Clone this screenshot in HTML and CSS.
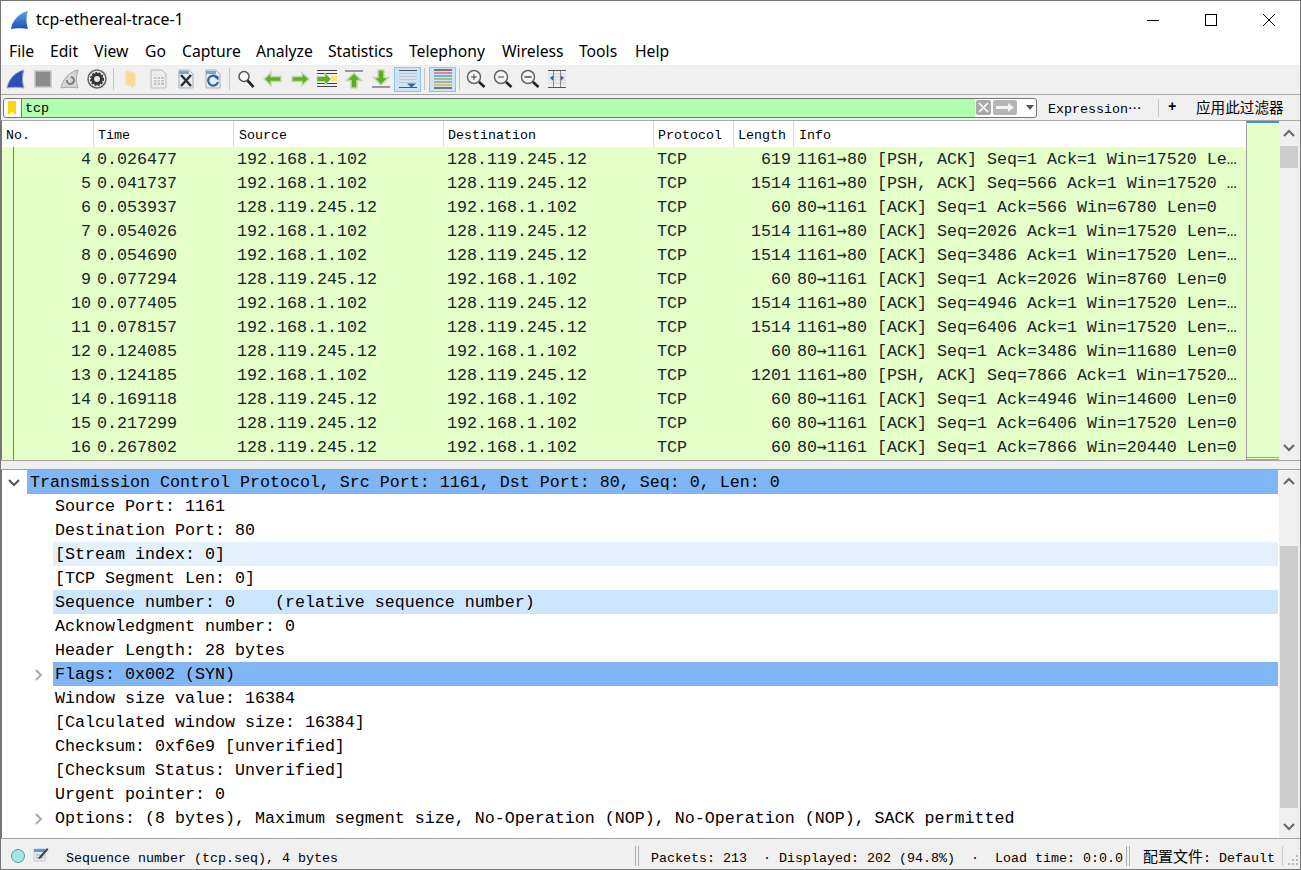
FILE: index.html
```html
<!DOCTYPE html>
<html lang="en">
<head>
<meta charset="utf-8">
<title>tcp-ethereal-trace-1</title>
<link rel="stylesheet" href="styles.css">
</head>
<body>
<div class="window">
  <header class="titlebar">
    <svg class="app-icon" width="20" height="20" viewBox="0 0 20 20"><defs><linearGradient id="fin" x1="0" y1="0" x2="0" y2="1"><stop offset="0" stop-color="#5fa4e8"/><stop offset="1" stop-color="#1c4fb4"/></linearGradient></defs><path d="M1 19C2 12 8 3 18 1c-2 5-2 12 0 18-5-1-12-1-17 0z" fill="url(#fin)"/></svg>
    <span class="title">tcp-ethereal-trace-1</span>
    <div class="winctl">
      <svg class="ctl" width="58" height="38" viewBox="0 0 58 38"><path d="M23 19.5h12" stroke="#000" fill="none"/></svg>
      <svg class="ctl" width="58" height="38" viewBox="0 0 58 38"><rect x="23.500" y="13.500" width="11" height="11" stroke="#000" fill="none"/></svg>
      <svg class="ctl" width="58" height="38" viewBox="0 0 58 38"><path d="M23 13l12 12M35 13L23 25" stroke="#000" fill="none"/></svg>
    </div>
  </header>
  <nav class="menubar">
    <span>File</span><span>Edit</span><span>View</span><span>Go</span><span>Capture</span><span>Analyze</span><span>Statistics</span><span>Telephony</span><span>Wireless</span><span>Tools</span><span>Help</span>
  </nav>
  <div class="toolbar">
    <div class="tb"><svg width="20" height="20" viewBox="0 0 20 20"><path d="M1 19C2 12 8 3 18 1c-2 5-2 12 0 18-5-1-12-1-17 0z" fill="#2c4fb8" stroke="#9aa6c8"/></svg></div>
    <div class="tb"><svg width="20" height="20" viewBox="0 0 20 20"><rect x="2" y="2" width="16" height="16" fill="#8c8c8c" stroke="#c4c4c4" stroke-width="1.500"/></svg></div>
    <div class="tb"><svg width="20" height="20" viewBox="0 0 20 20"><path d="M1 19C2 12 8 3 18 1c-2 5-2 12 0 18-5-1-12-1-17 0z" fill="#d6d6d6" stroke="#a8a8a8"/><path d="M7 11a3.500 3.500 0 1 0 4-3" fill="none" stroke="#808080" stroke-width="2"/></svg></div>
    <div class="tb"><svg width="20" height="20" viewBox="0 0 20 20"><circle cx="10" cy="10" r="9" fill="#e8e8e8" stroke="#666" stroke-width="1.500"/><circle cx="10" cy="10" r="4.500" fill="none" stroke="#333" stroke-width="3"/><circle cx="10" cy="10" r="6.300" fill="none" stroke="#333" stroke-width="1.500" stroke-dasharray="2 1.400"/></svg></div>
    <div class="tsep big"></div>
    <div class="tb"><svg width="20" height="20" viewBox="0 0 20 20"><path d="M4 2l7 2h2v12l-3 3-1-3H4z" fill="#fbdc8c" stroke="#f2dfae"/></svg></div>
    <div class="tb"><svg width="20" height="20" viewBox="0 0 20 20"><path d="M2 1h11l4 4v14H2z" fill="#ececec" stroke="#bbb"/><path d="M5 8h10v8H5z" fill="#c4c4c4"/><path d="M5 10.500h10M5 13h10M8 8v8M11.500 8v8" stroke="#f4f4f4" fill="none"/></svg></div>
    <div class="tb"><svg width="20" height="20" viewBox="0 0 20 20"><path d="M3 1h10l4 4v14H3z" fill="#e8eef2" stroke="#a8b0b6"/><path d="M3 2h10v3H3z" fill="#6aa9dc"/><path d="M5 6l10 11M15 6L5 17" stroke="#2b2b2b" stroke-width="2.400" fill="none"/></svg></div>
    <div class="tb"><svg width="20" height="20" viewBox="0 0 20 20"><path d="M3 1h10l4 4v14H3z" fill="#e8eef2" stroke="#a8b0b6"/><path d="M3 2h10v3H3z" fill="#6aa9dc"/><path d="M14.500 9a5 5 0 1 0 .500 4" stroke="#2c63b0" stroke-width="2.200" fill="none"/><path d="M11 8l4.500-1v4.500z" fill="#2c63b0"/></svg></div>
    <div class="tsep"></div>
    <div class="tb"><svg width="20" height="20" viewBox="0 0 20 20"><circle cx="8" cy="7.500" r="5" fill="#f4f6f8" stroke="#555" stroke-width="1.500"/><path d="M11.500 11.500l6 6.500" stroke="#222" stroke-width="2.600" fill="none"/></svg></div>
    <div class="tb"><svg width="20" height="20" viewBox="0 0 20 20"><path d="M1 10l7-6.500v4h10v5H8v4z" fill="#66ad22" stroke="#c4d8ae" stroke-width="1.500"/></svg></div>
    <div class="tb"><svg width="20" height="20" viewBox="0 0 20 20"><path d="M19 10l-7-6.500v4H2v5h10v4z" fill="#66ad22" stroke="#c4d8ae" stroke-width="1.500"/></svg></div>
    <div class="tb"><svg width="22" height="20" viewBox="0 0 22 20"><path d="M1 1.500h20M1 4.500h20M1 14.500h20M1 17.500h20" stroke="#444" fill="none"/><path d="M15 7h6v5h-6z" fill="#f7e56e"/><path d="M15 10l-6-6v3.500H1v5h8V16z" fill="#66ad22" stroke="#c4d8ae"/></svg></div>
    <div class="tb"><svg width="20" height="20" viewBox="0 0 20 20"><path d="M1 2h18" stroke="#999" stroke-width="2" fill="none"/><path d="M10 4l7.500 7.500H13V19H7v-7.500H2.500z" fill="#5fae1e" stroke="#c4d8ae" stroke-width="1.500"/></svg></div>
    <div class="tb"><svg width="20" height="20" viewBox="0 0 20 20"><path d="M1 18h18" stroke="#999" stroke-width="2" fill="none"/><path d="M10 16L17.500 8.500H13V1H7v7.500H2.500z" fill="#5fae1e" stroke="#c4d8ae" stroke-width="1.500"/></svg></div>
    <div class="tb on"><svg width="20" height="20" viewBox="0 0 20 20"><path d="M1 1.500h18" stroke="#555" fill="none"/><path d="M1 4.500h18M1 7.500h18M1 10.500h18M1 13.500h18" stroke="#c8c8c8" fill="none"/><path d="M1 18.500h18" stroke="#555" fill="none"/><path d="M9 14.500h9l-4.500 4z" fill="#2c63b0"/></svg></div>
    <div class="tsep big"></div>
    <div class="tb on"><svg width="20" height="20" viewBox="0 0 20 20"><path d="M1 1h18" stroke="#555" stroke-width="1.500" fill="none"/><path d="M1 4h18" stroke="#e06666" stroke-width="1.500" fill="none"/><path d="M1 7h18" stroke="#6a8fd8" stroke-width="1.500" fill="none"/><path d="M1 10h18" stroke="#7cc04a" stroke-width="1.500" fill="none"/><path d="M1 13h18" stroke="#9a9a9a" stroke-width="1.500" fill="none"/><path d="M1 16h18" stroke="#e0b83a" stroke-width="1.500" fill="none"/><path d="M1 19h18" stroke="#555" stroke-width="1.500" fill="none"/></svg></div>
    <div class="tsep"></div>
    <div class="tb"><svg width="20" height="20" viewBox="0 0 20 20"><circle cx="8" cy="8" r="6.500" fill="#f4f4f4" stroke="#666" stroke-width="1.500"/><path d="M5 8h6M8 5v6" stroke="#444" fill="none"/><path d="M13 13l5.500 5" stroke="#222" stroke-width="2.600" fill="none"/></svg></div>
    <div class="tb"><svg width="20" height="20" viewBox="0 0 20 20"><circle cx="8" cy="8" r="6.500" fill="#f4f4f4" stroke="#666" stroke-width="1.500"/><path d="M5 8h6" stroke="#444" fill="none"/><path d="M13 13l5.500 5" stroke="#222" stroke-width="2.600" fill="none"/></svg></div>
    <div class="tb"><svg width="20" height="20" viewBox="0 0 20 20"><circle cx="8" cy="8" r="6.500" fill="#f4f4f4" stroke="#666" stroke-width="1.500"/><path d="M4.500 7h7v2h-7z" fill="#777"/><path d="M13 13l5.500 5" stroke="#222" stroke-width="2.600" fill="none"/></svg></div>
    <div class="tb"><svg width="20" height="20" viewBox="0 0 20 20"><path d="M1 1.500h18M1 18.500h18" stroke="#555" fill="none"/><path d="M1 5h18M1 8h18M1 11h18M1 14h18" stroke="#cfcfcf" fill="none"/><path d="M6.500 2v16M13.500 2v16" stroke="#888" fill="none"/><path d="M6 6.500v5l-3-2.500zM14 6.500v5l3-2.500z" fill="#2c63b0"/></svg></div>
  </div>
  <div class="filterbar">
    <div class="filter">
      <div class="bookmark"><svg width="10" height="16" viewBox="0 0 10 16"><path d="M1 1h8v14l-4-3-4 3z" fill="#f7d80c"/></svg></div>
      <div class="finput">tcp</div>
      <div class="fbtns">
        <svg width="15" height="15" viewBox="0 0 15 15"><rect width="15" height="15" rx="2" fill="#aaa"/><path d="M3 3l9 9M12 3l-9 9" stroke="#fff" stroke-width="1.600" fill="none"/></svg>
        <svg width="24" height="15" viewBox="0 0 24 15"><rect width="24" height="15" rx="2" fill="#b5b5b5"/><path d="M3 6h12V3l6 4.500-6 4.500V9H3z" fill="#f4f4f4"/></svg>
        <svg class="fdrop" width="8" height="5" viewBox="0 0 8 5"><path d="M0 0h8L4 5z" fill="#555"/></svg>
      </div>
    </div>
    <span class="fexpr">Expression<span class="wide" lang="zh-CN">…</span></span>
    <div class="fsep"></div>
    <span class="fplus">+</span>
    <span class="fapply" lang="zh-CN">应用此过滤器</span>
  </div>
  <section class="packets">
    <div class="plist">
      <div class="phead"><span>No.</span><span>Time</span><span>Source</span><span>Destination</span><span>Protocol</span><span>Length</span><span>Info</span></div>
      <div class="pbody">
        <div class="prow"><span class="no">4</span><span>0.026477</span><span>192.168.1.102</span><span>128.119.245.12</span><span>TCP</span><span class="len">619</span><span>1161<b class="arr">→</b>80 [PSH, ACK] Seq=1 Ack=1 Win=17520 Le…</span></div>
        <div class="prow"><span class="no">5</span><span>0.041737</span><span>192.168.1.102</span><span>128.119.245.12</span><span>TCP</span><span class="len">1514</span><span>1161<b class="arr">→</b>80 [PSH, ACK] Seq=566 Ack=1 Win=17520 …</span></div>
        <div class="prow"><span class="no">6</span><span>0.053937</span><span>128.119.245.12</span><span>192.168.1.102</span><span>TCP</span><span class="len">60</span><span>80<b class="arr">→</b>1161 [ACK] Seq=1 Ack=566 Win=6780 Len=0</span></div>
        <div class="prow"><span class="no">7</span><span>0.054026</span><span>192.168.1.102</span><span>128.119.245.12</span><span>TCP</span><span class="len">1514</span><span>1161<b class="arr">→</b>80 [ACK] Seq=2026 Ack=1 Win=17520 Len=…</span></div>
        <div class="prow"><span class="no">8</span><span>0.054690</span><span>192.168.1.102</span><span>128.119.245.12</span><span>TCP</span><span class="len">1514</span><span>1161<b class="arr">→</b>80 [ACK] Seq=3486 Ack=1 Win=17520 Len=…</span></div>
        <div class="prow"><span class="no">9</span><span>0.077294</span><span>128.119.245.12</span><span>192.168.1.102</span><span>TCP</span><span class="len">60</span><span>80<b class="arr">→</b>1161 [ACK] Seq=1 Ack=2026 Win=8760 Len=0</span></div>
        <div class="prow"><span class="no">10</span><span>0.077405</span><span>192.168.1.102</span><span>128.119.245.12</span><span>TCP</span><span class="len">1514</span><span>1161<b class="arr">→</b>80 [ACK] Seq=4946 Ack=1 Win=17520 Len=…</span></div>
        <div class="prow"><span class="no">11</span><span>0.078157</span><span>192.168.1.102</span><span>128.119.245.12</span><span>TCP</span><span class="len">1514</span><span>1161<b class="arr">→</b>80 [ACK] Seq=6406 Ack=1 Win=17520 Len=…</span></div>
        <div class="prow"><span class="no">12</span><span>0.124085</span><span>128.119.245.12</span><span>192.168.1.102</span><span>TCP</span><span class="len">60</span><span>80<b class="arr">→</b>1161 [ACK] Seq=1 Ack=3486 Win=11680 Len=0</span></div>
        <div class="prow"><span class="no">13</span><span>0.124185</span><span>192.168.1.102</span><span>128.119.245.12</span><span>TCP</span><span class="len">1201</span><span>1161<b class="arr">→</b>80 [PSH, ACK] Seq=7866 Ack=1 Win=17520…</span></div>
        <div class="prow"><span class="no">14</span><span>0.169118</span><span>128.119.245.12</span><span>192.168.1.102</span><span>TCP</span><span class="len">60</span><span>80<b class="arr">→</b>1161 [ACK] Seq=1 Ack=4946 Win=14600 Len=0</span></div>
        <div class="prow"><span class="no">15</span><span>0.217299</span><span>128.119.245.12</span><span>192.168.1.102</span><span>TCP</span><span class="len">60</span><span>80<b class="arr">→</b>1161 [ACK] Seq=1 Ack=6406 Win=17520 Len=0</span></div>
        <div class="prow"><span class="no">16</span><span>0.267802</span><span>128.119.245.12</span><span>192.168.1.102</span><span>TCP</span><span class="len">60</span><span>80<b class="arr">→</b>1161 [ACK] Seq=1 Ack=7866 Win=20440 Len=0</span></div>
      </div>
    </div>
    <div class="minimap"></div>
    <div class="scroll">
      <svg class="sarrow" width="18" height="24" viewBox="0 0 18 24"><path d="M4 15l5-5 5 5" stroke="#666" stroke-width="2" fill="none"/></svg>
      <div class="sgap pk-top"></div>
      <div class="sthumb pk-thumb"></div>
      <div class="sfill"></div>
      <svg class="sarrow" width="18" height="24" viewBox="0 0 18 24"><path d="M4 9l5 5 5-5" stroke="#666" stroke-width="2" fill="none"/></svg>
    </div>
  </section>
  <div class="splitter"></div>
  <section class="details">
    <div class="dlist">
      <div class="drow lv0 sel"><svg class="twist" width="12" height="10" viewBox="0 0 12 10"><path d="M1 2l5 5 5-5" stroke="#555" stroke-width="2" fill="none"/></svg><span class="dtext">Transmission Control Protocol, Src Port: 1161, Dst Port: 80, Seq: 0, Len: 0</span></div>
      <div class="drow lv1"><span class="dtext">Source Port: 1161</span></div>
      <div class="drow lv1"><span class="dtext">Destination Port: 80</span></div>
      <div class="drow lv1 pale"><span class="dtext">[Stream index: 0]</span></div>
      <div class="drow lv1"><span class="dtext">[TCP Segment Len: 0]</span></div>
      <div class="drow lv1 light"><span class="dtext">Sequence number: 0    (relative sequence number)</span></div>
      <div class="drow lv1"><span class="dtext">Acknowledgment number: 0</span></div>
      <div class="drow lv1"><span class="dtext">Header Length: 28 bytes</span></div>
      <div class="drow lv1 sel"><svg class="twist side" width="10" height="12" viewBox="0 0 10 12"><path d="M2 1l5 5-5 5" stroke="#aaa" stroke-width="2" fill="none"/></svg><span class="dtext">Flags: 0x002 (SYN)</span></div>
      <div class="drow lv1"><span class="dtext">Window size value: 16384</span></div>
      <div class="drow lv1"><span class="dtext">[Calculated window size: 16384]</span></div>
      <div class="drow lv1"><span class="dtext">Checksum: 0xf6e9 [unverified]</span></div>
      <div class="drow lv1"><span class="dtext">[Checksum Status: Unverified]</span></div>
      <div class="drow lv1"><span class="dtext">Urgent pointer: 0</span></div>
      <div class="drow lv1"><svg class="twist side" width="10" height="12" viewBox="0 0 10 12"><path d="M2 1l5 5-5 5" stroke="#aaa" stroke-width="2" fill="none"/></svg><span class="dtext">Options: (8 bytes), Maximum segment size, No-Operation (NOP), No-Operation (NOP), SACK permitted</span></div>
    </div>
    <div class="scroll">
      <svg class="sarrow" width="18" height="24" viewBox="0 0 18 24"><path d="M4 14l5-5 5 5" stroke="#666" stroke-width="2" fill="none"/></svg>
      <div class="sgap dt-top"></div>
      <div class="sthumb dt-thumb"></div>
      <div class="sfill"></div>
      <svg class="sarrow" width="18" height="24" viewBox="0 0 18 24"><path d="M4 10l5 5 5-5" stroke="#666" stroke-width="2" fill="none"/></svg>
    </div>
  </section>
  <footer class="statusbar">
    <span class="dot"></span>
    <svg class="edit" width="16" height="16" viewBox="0 0 16 16"><path d="M1 3h11v12H1z" fill="#dfe9f0" stroke="#c4ccd2"/><path d="M1 3h11v3H1z" fill="#5a9bd8"/><path d="M3 9h7M3 11.500h7" stroke="#aaa" fill="none"/><path d="M6 11l8-9 1.500 1.500-8 9-2.500.5z" fill="#444"/></svg>
    <span class="s-field">Sequence number (tcp.seq), 4 bytes</span>
    <div class="dsep"></div>
    <span class="s-pkts">Packets: 213  · Displayed: 202 (94.8%)  ·  Load time: 0:0.0</span>
    <div class="dsep"></div>
    <span class="s-prof"><span class="cjk" lang="zh-CN">配置文件</span>: Default</span>
    <div class="grip"><svg width="12" height="12" viewBox="0 0 12 12"><path d="M9 1h2v2H9zM5 5h2v2H5zM9 5h2v2H9zM1 9h2v2H1zM5 9h2v2H5zM9 9h2v2H9z" fill="#bbb"/></svg></div>
  </footer>
</div>
</body>
</html>
```
FILE: styles.css
```css
* { box-sizing: border-box; }
html, body { margin: 0; padding: 0; }
body { width: 1301px; height: 870px; overflow: hidden; background: #fff; }
.window {
  width: 1301px; height: 870px;
  border: 1px solid #767676;
  display: flex; flex-direction: column;
  background: #f0f0f0;
  font-family: "Liberation Mono", "Noto Sans CJK SC", monospace;
  font-size: 13.33px; color: #000;
}
.titlebar { height: 38px; background: #fff; display: flex; align-items: center; padding-left: 9px; flex: none; }
.app-icon { flex: none; margin-top: -1px; }
.title { font-family: "Noto Sans", sans-serif; font-size: 16px; margin-left: 6px; margin-top: -3px; }
.winctl { margin-left: auto; display: flex; margin-right: 2px; }
.ctl { display: block; margin-top: -1px; }
.menubar {
  height: 27px; background: #fff; display: flex; align-items: center; flex: none;
  font-family: "Noto Sans", sans-serif; font-size: 15.7px; padding-left: 8px; padding-bottom: 3px;
  border-bottom: 1px solid #ececec;
}
.menubar span:nth-child(1) { width: 41px; }
.menubar span:nth-child(2) { width: 44px; }
.menubar span:nth-child(3) { width: 51px; }
.menubar span:nth-child(4) { width: 37px; }
.menubar span:nth-child(5) { width: 74px; }
.menubar span:nth-child(6) { width: 72px; }
.menubar span:nth-child(7) { width: 81px; }
.menubar span:nth-child(8) { width: 93px; }
.menubar span:nth-child(9) { width: 77px; }
.menubar span:nth-child(10) { width: 56px; }
.toolbar { height: 29px; flex: none; display: flex; align-items: center; padding-left: 1px; padding-bottom: 2px; border-bottom: 1px solid #a8a8a8; }
.tb { width: 27px; height: 25px; display: flex; align-items: center; justify-content: center; flex: none; }
.tb.on { background: #cde4f7; border: 1px solid #8ec4f0; }
.tsep { width: 6px; height: 22px; flex: none; }
.tsep.big { width: 8px; }
.tsep::before { content: ""; display: block; width: 1px; height: 22px; margin-left: 3px; background: #c6c6c6; }
.filterbar { height: 26px; flex: none; display: flex; align-items: center; padding-left: 2px; font-size: 13.33px; border-bottom: 1px solid #a8a8a8; }
.filter {
  width: 1034px; height: 20px; display: flex; flex: none; background: #fff;
  border: 1px solid #767676; border-radius: 3px; overflow: hidden;
}
.bookmark { width: 18px; border-right: 1px solid #767676; display: flex; align-items: center; padding-left: 3px; flex: none; }
.finput { width: 953px; background: #afffaf; padding-left: 3px; line-height: 20px; flex: none; }
.fbtns { display: flex; align-items: center; gap: 2px; flex: none; padding-left: 1px; }
.fdrop { margin-left: 7px; }
.fexpr { margin-left: 11px; width: 110px; flex: none; white-space: nowrap; }
.wide { font-family: "Noto Sans CJK SC", sans-serif; }
.fsep { width: 1px; height: 18px; background: #c6c6c6; flex: none; }
.fplus { margin-left: 9px; width: 28px; font-weight: bold; flex: none; font-size: 14px; margin-bottom: 2px; }
.fapply { font-family: "Noto Sans CJK SC", sans-serif; font-size: 14.6px; flex: none; margin-bottom: 2px; }
.packets { height: 340px; flex: none; display: flex; background: #fff; border-bottom: 1px solid #a0a0a0; }
.plist { width: 1245px; flex: none; border-left: 1px solid #767676; }
.phead, .prow { display: grid; grid-template-columns: 91px 140px 210px 210px 80px 60px 1fr; }
.phead { height: 26px; align-items: center; background: #fff; font-size: 13.33px; }
.phead span { padding-left: 4px; border-left: 1px solid #dcdcdc; height: 26px; line-height: 29px; }
.phead span:first-child { border-left: 0; }
.phead span:nth-child(3), .phead span:nth-child(7) { padding-left: 5px; }
.pbody { background: linear-gradient(#808080,#808080) 11px 0 / 1px 100% no-repeat, #e4ffc7; height: 313px; overflow: hidden; }
.prow { height: 24px; line-height: 26px; font-size: 16.67px; color: #12272e; white-space: nowrap; overflow: hidden; }
.prow span { overflow: hidden; }
.prow .no { text-align: right; padding-right: 2px; }
.prow .len { text-align: right; margin-right: 2px; }
.prow span:nth-child(2), .prow span:nth-child(3), .prow span:nth-child(4), .prow span:nth-child(5) { padding-left: 4px; }
.prow span:nth-child(7) { padding-left: 4px; }
.arr { font-family: "DejaVu Sans Mono", monospace; font-weight: normal; font-size: 16.6px; line-height: 0; }
.minimap { width: 33px; flex: none; background: #e4ffc7; border-top: 2px solid #4f8fd0; border-left: 1px solid #a0a0a0; border-bottom: 3px double #a0a0a0; }
.scroll { width: 21px; flex: none; background: #f0f0f0; display: flex; flex-direction: column; border-left: 1px solid #f0f0f0; }
.sarrow { flex: none; display: block; }
.sgap { flex: none; }
.pk-top { height: 1px; }
.pk-thumb { height: 22px; }
.sthumb { background: #cdcdcd; width: 18px; flex: none; }
.sfill { flex: 1; }
.splitter { height: 9px; flex: none; background: #f0f0f0; border-bottom: 1px solid #a0a0a0; }
.details { flex: 1; display: flex; background: #fff; min-height: 0; border-left: 1px solid #767676; }
.dlist { width: 1276px; flex: none; overflow: hidden; font-size: 16.67px; margin-right: 1px; }
.drow { height: 24px; line-height: 26px; position: relative; white-space: pre; }
.drow.lv0 { padding-left: 25px; }
.drow.lv1 { padding-left: 51px; }
.dtext { display: block; padding-left: 2px; height: 24px; color: #000; }
.lv0 .dtext { padding-left: 3px; }
.sel .dtext { background: #80b6f6; }
.light .dtext { background: #cce6ff; }
.pale .dtext { background: #e4f1fd; }
.twist { position: absolute; top: 8px; left: 6px; }
.twist.side { left: 32px; top: 7px; }
.dt-top { height: 52px; }
.dt-thumb { height: 262px; }
.statusbar { height: 31px; flex: none; display: flex; align-items: center; border-top: 1px solid #a0a0a0; font-size: 13.33px; padding-left: 10px; line-height: 30px; }
.statusbar > span:not(.dot) { padding-top: 9px; line-height: 20px; }
.dot { width: 14px; height: 14px; border-radius: 50%; background: #a8e6e6; border: 1px solid #5e9a9a; flex: none; margin-top: 3px; }
.edit { margin-left: 8px; flex: none; }
.s-field { margin-left: 17px; width: 569px; flex: none; }
.dsep { width: 4px; height: 20px; border-left: 1px solid #b0b0b0; border-right: 1px solid #b0b0b0; flex: none; margin-top: 3px; }
.s-pkts { margin-left: 12px; width: 475px; flex: none; white-space: pre; }
.s-prof { margin-left: 13px; width: 137px; flex: none; white-space: nowrap; }
.cjk { font-family: "Noto Sans CJK SC", sans-serif; font-size: 15px; line-height: 0; }
.grip { margin-left: auto; width: 18px; height: 20px; display: flex; align-items: flex-end; border-left: 1px solid #d0d0d0; padding-left: 4px; margin-top: 3px; }
```
